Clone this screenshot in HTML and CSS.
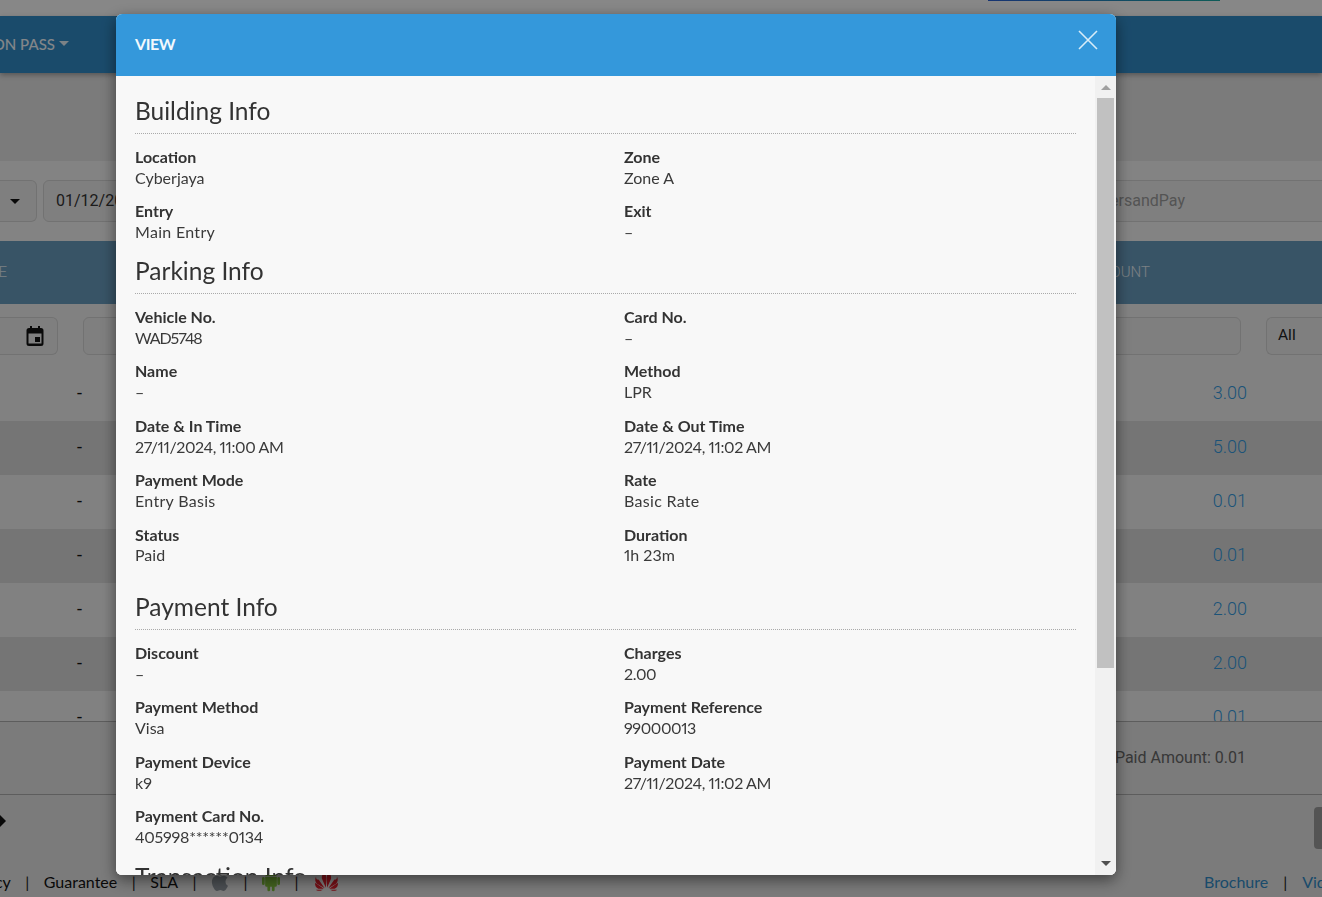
FILE: index.html
```html
<!DOCTYPE html>
<html lang="en">
<head>
<meta charset="utf-8">
<title>View</title>
<link rel="stylesheet" href="styles.css">
</head>
<body>
<div class="page">
  <div class="top-strip"><span class="top-btn"></span></div>
  <nav class="nav"><div class="nav-left">COMMON PASS <span class="caret caret-light"></span></div></nav>
  <div class="blank"></div>
  <div class="filters">
    <div class="field field-select"><span class="caret"></span></div>
    <div class="field field-date">01/12/2024</div>
    <div class="field field-search">ParkersandPay</div>
  </div>
  <div class="thead"><span class="th-left">DATE</span><span class="th-right">AMOUNT</span></div>
  <div class="tfilter">
    <div class="box box-cal">
      <svg class="cal" viewBox="0 0 18 20" aria-hidden="true"><path d="M4 0v2H3a2.500 2.500 0 0 0-2.500 2.500v13A2.500 2.500 0 0 0 3 20h12a2.500 2.500 0 0 0 2.500-2.500v-13A2.500 2.500 0 0 0 15 2h-1V0h-2v2H6V0zM2.500 7.500h13v10h-13z"/><rect x="9" y="11" width="5" height="5"/></svg>
    </div>
    <div class="box box-mid"></div>
    <div class="box box-wide"></div>
    <div class="box box-all">All</div>
  </div>
  <div class="tbody">
    <div class="row"><span class="dash">-</span><span class="amt">3.00</span></div>
    <div class="row alt"><span class="dash">-</span><span class="amt">5.00</span></div>
    <div class="row"><span class="dash">-</span><span class="amt">0.01</span></div>
    <div class="row alt"><span class="dash">-</span><span class="amt">0.01</span></div>
    <div class="row"><span class="dash">-</span><span class="amt">2.00</span></div>
    <div class="row alt"><span class="dash">-</span><span class="amt">2.00</span></div>
    <div class="row"><span class="dash">-</span><span class="amt">0.01</span></div>
  </div>
  <div class="summary">Paid Amount: 0.01</div>
  <div class="pager"><span class="pager-arrow"></span><span class="pager-btn"></span></div>
  <footer class="foot">
    <div class="foot-left">
      <span>Privacy</span><i>|</i><span>Guarantee</span><i>|</i><span>SLA</span><i>|</i>
      <svg class="os" viewBox="3 1 18 22" aria-hidden="true"><path fill="#8a9198" d="M17.500 12.600c0-2.500 2-3.700 2.100-3.800-1.200-1.700-3-1.900-3.600-2-1.500-.2-3 .9-3.800.9s-2-.9-3.300-.9c-1.700 0-3.300 1-4.100 2.500-1.800 3-.5 7.600 1.200 10.100.8 1.200 1.800 2.600 3.100 2.500 1.300 0 1.700-.8 3.200-.8s1.900.8 3.200.8 2.200-1.200 3-2.400c1-1.400 1.400-2.700 1.400-2.800-.1 0-2.400-1-2.400-4.100zM15 5.200c.7-.8 1.100-2 1-3.200-1 0-2.200.7-2.900 1.500-.6.700-1.200 1.900-1 3.100 1.100.1 2.200-.6 2.900-1.400z"/></svg>
      <i>|</i>
      <svg class="os" viewBox="2 1 20 24" aria-hidden="true"><path fill="#7cb83a" d="M5.500 8.500h13V18a1.500 1.500 0 0 1-1.500 1.500h-1V23a1.500 1.500 0 0 1-3 0v-3.500h-2V23a1.500 1.500 0 0 1-3 0v-3.500H7A1.500 1.500 0 0 1 5.500 18zM3.500 8.500A1.500 1.500 0 0 1 5 10v6a1.500 1.500 0 0 1-3 0v-6a1.500 1.500 0 0 1 1.500-1.500zm17 0A1.500 1.500 0 0 1 22 10v6a1.500 1.500 0 0 1-3 0v-6a1.500 1.500 0 0 1 1.500-1.500zM8 1l1.500 2.200A7 7 0 0 1 12 2.800c.9 0 1.800.1 2.500.4L16 1l.5.3-1.400 2.200a6 6 0 0 1 3.400 4.200h-13a6 6 0 0 1 3.400-4.200L7.500 1.300zM9.500 5a.8.800 0 1 0 0 1.600.8.800 0 0 0 0-1.600zm5 0a.8.800 0 1 0 0 1.600.8.800 0 0 0 0-1.600z"/></svg>
      <i>|</i>
      <svg class="os os-wide" viewBox="0 0 28 22" aria-hidden="true"><g fill="#d81e2a"><path d="M13.300 18.500 9 8.500C8.300 5 10.500 3 11.500 1.500c1.800 2 2.600 5 2.300 8.500z"/><path d="M14.700 18.500 19 8.500c.7-3.500-1.500-5.500-2.500-7-1.800 2-2.600 5-2.300 8.500z"/><path d="M12 19 5.500 9.500C3.500 9 2.800 10 2.500 6c-1.500 3-1 6 1 8z"/><path d="M16 19l6.500-9.500C24.500 9 25.200 10 25.500 6c1.500 3 1 6-1 8z"/><path d="M11 19.500 1.500 13C1 16 2.500 18.500 5 19.500z"/><path d="M17 19.500 26.500 13c.5 3-1 5.500-3.500 6.500z"/><path d="M10 20.500H2.500c1 1.500 4 2 7.500 0z"/><path d="M18 20.500h7.500c-1 1.500-4 2-7.500 0z"/></g></svg>
    </div>
    <div class="foot-right"><a>Brochure</a><i>|</i><a>Video</a></div>
  </footer>
</div>

<div class="backdrop"></div>

<section class="modal" role="dialog">
  <header class="modal-head">
    <h1>VIEW</h1>
    <svg class="close" viewBox="0 0 20 20" aria-hidden="true"><path d="M1 1l18 18M19 1L1 19"/></svg>
  </header>
  <div class="modal-main">
    <div class="modal-body">
      <h2>Building Info</h2>
      <div class="info">
        <div class="item"><b>Location</b><span>Cyberjaya</span></div>
        <div class="item"><b>Zone</b><span>Zone A</span></div>
        <div class="item"><b>Entry</b><span class="wide">Main Entry</span></div>
        <div class="item"><b>Exit</b><span>–</span></div>
      </div>
      <h2 class="sec-tight">Parking Info</h2>
      <div class="info">
        <div class="item"><b>Vehicle No.</b><span class="plate">WAD5748</span></div>
        <div class="item"><b>Card No.</b><span>–</span></div>
        <div class="item"><b>Name</b><span>–</span></div>
        <div class="item"><b>Method</b><span>LPR</span></div>
        <div class="item"><b>Date &amp; In Time</b><span class="num">27/11/2024, 11:00 AM</span></div>
        <div class="item"><b>Date &amp; Out Time</b><span class="num">27/11/2024, 11:02 AM</span></div>
        <div class="item"><b>Payment Mode</b><span class="wide">Entry Basis</span></div>
        <div class="item"><b>Rate</b><span class="wide">Basic Rate</span></div>
        <div class="item"><b>Status</b><span>Paid</span></div>
        <div class="item"><b>Duration</b><span>1h 23m</span></div>
      </div>
      <h2 class="sec-loose">Payment Info</h2>
      <div class="info">
        <div class="item"><b>Discount</b><span>–</span></div>
        <div class="item"><b>Charges</b><span class="num">2.00</span></div>
        <div class="item"><b>Payment Method</b><span>Visa</span></div>
        <div class="item"><b>Payment Reference</b><span class="num">99000013</span></div>
        <div class="item"><b>Payment Device</b><span>k9</span></div>
        <div class="item"><b>Payment Date</b><span class="num">27/11/2024, 11:02 AM</span></div>
        <div class="item"><b>Payment Card No.</b><span class="card">405998******0134</span></div>
      </div>
      <h2 class="sec-last">Transaction Info</h2>
    </div>
    <div class="scrollbar">
      <span class="sb-btn sb-btn-top"><span class="sb-up"></span></span>
      <span class="sb-thumb"></span>
      <span class="sb-fill"></span>
      <span class="sb-btn sb-btn-bot"><span class="sb-down"></span></span>
    </div>
  </div>
</section>
</body>
</html>
```
FILE: styles.css
```css
* { box-sizing: border-box; }
html, body { margin: 0; height: 897px; overflow: hidden; }
body { font-family: "Lato", "Liberation Sans", sans-serif; background: #f4f4f4; color: #222; }

.page { width: 1322px; height: 897px; display: flex; flex-direction: column; overflow: hidden; font-family: "Roboto", sans-serif; font-size: 16px; background: #e0e0e0; }

.top-strip { height: 16px; background: #f6f6f6; padding-left: 988px; flex: none; }
.top-btn { display: block; width: 232px; height: 1px; background: linear-gradient(90deg, #2a5fd0, #1aa7a0); }

.nav { height: 57px; flex: none; background: #3089c4; display: flex; align-items: center; box-shadow: 0 2px 5px rgba(0,0,0,.3); position: relative; }
.nav-left { width: 69px; display: flex; justify-content: flex-end; align-items: center; white-space: nowrap; gap: 4px; padding-bottom: 2px; color: #eef5fa; font-family: "Lato", sans-serif; font-size: 15px; font-weight: 500; }

.caret { display: block; width: 0; height: 0; border: 5px solid transparent; border-top-color: #111; border-bottom: 0; }
.caret-light { border-top-color: #e2edf4; }

.blank { height: 88px; flex: none; }

.filters { height: 80px; flex: none; background: #eeeeee; display: flex; align-items: center; gap: 6px; color: #333; }
.field { height: 42px; border: 1px solid #d0d0d0; border-radius: 6px; display: flex; align-items: center; background: #e8e8e8; padding-bottom: 2px; }
.field-select { width: 37px; justify-content: center; padding: 0 7px 0 0; border-left: 0; border-radius: 0 6px 6px 0; }
.field-date { width: 200px; padding-left: 12px; white-space: nowrap; overflow: hidden; }
.field-search { margin-left: auto; width: 300px; padding-left: 55px; color: #999; white-space: nowrap; border-right: 0; border-radius: 6px 0 0 6px; }

.thead { height: 63px; flex: none; background: #6799bb; display: flex; justify-content: space-between; align-items: center; padding-bottom: 2px; color: #e0eaf0; font-size: 15px; font-weight: 300; }
.th-left { width: 7px; display: flex; justify-content: flex-end; }
.th-right { padding-right: 172px; margin-left: auto; }

.tfilter { height: 63px; flex: none; display: flex; align-items: center; background: #ececec; padding-top: 1px; }
.box { height: 38px; border: 1px solid #cfcfcf; border-radius: 6px; background: #e8e8e8; flex: none; }
.box-cal { width: 58px; border-left: 0; border-radius: 0 6px 6px 0; display: flex; align-items: center; justify-content: flex-end; padding: 0 13px 1px 0; }
.cal { width: 18px; height: 20px; fill: #111; }
.box-mid { width: 300px; margin-left: 25px; }
.box-wide { width: 858px; margin-right: 25px; }
.box-all { width: 56px; padding-left: 11px; line-height: 34px; border-right: 0; border-radius: 6px 0 0 6px; color: #222; font-size: 15.500px; }

.tbody { height: 354px; flex: none; overflow: hidden; background: #ececec; }
.row { height: 54px; display: flex; justify-content: space-between; padding: 15px 75px 0 77px; font-size: 18px; font-weight: 300; }
.row.alt { background: #d6d6d6; }
.amt { color: #3498db; }
.dash { color: #111; font-weight: 400; }

.summary { height: 74px; flex: none; display: flex; align-items: center; justify-content: flex-end; padding: 0 76px 2px 0; border-top: 1px solid #aaa; border-bottom: 1px solid #aaa; color: #666; }

.pager { height: 74px; flex: none; display: flex; justify-content: space-between; padding-top: 12px; }
.pager-arrow { width: 0; height: 0; margin-top: 8px; border: 6px solid transparent; border-left-color: #111; border-right: 0; }
.pager-btn { width: 8px; height: 42px; background: #9a9a9a; border-radius: 4px 0 0 4px; }

.foot { flex: none; height: 28px; display: flex; justify-content: space-between; align-items: center; padding-bottom: 4px; color: #111; font-family: "Lato", sans-serif; }
.foot i { font-style: normal; width: 2px; flex: none; display: flex; justify-content: center; color: #222; }
.foot-left { width: 340px; display: flex; justify-content: flex-end; align-items: center; gap: 15.500px; white-space: nowrap; flex: none; }
.os { width: 18px; height: 22px; flex: none; }
.os-wide { width: 27px; height: 20px; }
.foot-right { width: 118px; display: flex; gap: 16px; white-space: nowrap; flex: none; }
.foot-right a { color: #3089c4; }

.backdrop { position: fixed; inset: 0; background: rgba(0,0,0,.45); }

.modal { position: fixed; left: 116px; top: 14px; width: 1000px; height: 861px; border-radius: 6px; overflow: hidden; background: #f8f8f8; box-shadow: 0 5px 15px rgba(0,0,0,.5); display: flex; flex-direction: column; font-family: "Lato", sans-serif; }
.modal-head { height: 62px; flex: none; background: #3498db; display: flex; align-items: center; justify-content: space-between; padding: 0 18px 0 19px; }
.modal-head h1 { margin: 0 0 4px; font-size: 16px; font-weight: 700; letter-spacing: -.4px; color: #f2f9fd; }
.close { width: 20px; height: 20px; margin-bottom: 11px; fill: none; stroke: #d8ecf8; stroke-width: 1.6; }

.modal-main { flex: 1; min-height: 0; display: flex; background: #fff; }
.modal-body { flex: 1; min-width: 0; overflow: hidden; background: #f8f8f8; padding: 20px 19px 0 19px; color: #3a3a3a; }
.modal-body h2 { margin: 0 0 13px; height: 38px; font-size: 24.500px; font-weight: 400; line-height: 29px; border-bottom: 1px dotted #aaa; color: #333; }
.modal-body h2.sec-tight { margin-top: 13px; }
.modal-body h2.sec-loose { margin-top: 25.800px; }
.modal-body h2.sec-last { margin-top: 14px; }
.info { display: grid; grid-template-columns: 489px 1fr; row-gap: 12.800px; }
.item { display: flex; flex-direction: column; font-size: 16px; line-height: 20.800px; }
.item b { font-weight: 700; color: #333; }
.item span { font-variant-numeric: proportional-nums; }
.item .num { letter-spacing: -.4px; }
.item .card { letter-spacing: -.25px; }
.item .plate { letter-spacing: -1.100px; }
.item .wide { letter-spacing: .3px; }
.scrollbar { width: 21px; flex: none; display: flex; flex-direction: column; background: #f1f1f1; }
.sb-btn { height: 22px; flex: none; display: flex; justify-content: center; }
.sb-btn-top { padding-top: 9px; }
.sb-btn-bot { padding-top: 8px; }
.sb-up { width: 0; height: 0; border: 5px solid transparent; border-bottom-color: #a0a0a0; border-top: 0; }
.sb-down { width: 0; height: 0; border: 5px solid transparent; border-top-color: #505050; border-bottom: 0; }
.sb-thumb { height: 570px; margin: 0 2px; background: #c1c1c1; flex: none; }
.sb-fill { flex: 1; }
```
